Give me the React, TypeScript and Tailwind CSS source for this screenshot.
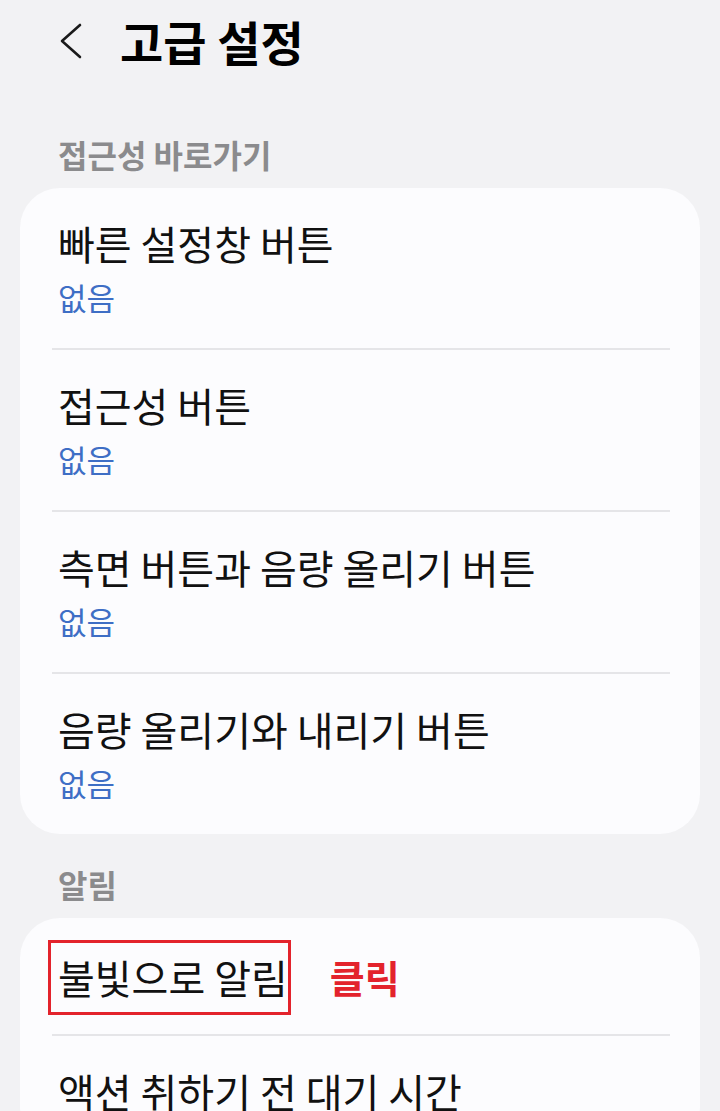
const font = { fontFamily: '"Noto Sans CJK KR", "Noto Sans", sans-serif' };

type Item = { title: string; value?: string };

const shortcuts: Item[] = [
  { title: "빠른 설정창 버튼", value: "없음" },
  { title: "접근성 버튼", value: "없음" },
  { title: "측면 버튼과 음량 올리기 버튼", value: "없음" },
  { title: "음량 올리기와 내리기 버튼", value: "없음" },
];

function Row({ item }: { item: Item }) {
  return (
    <div className="px-[38px] pt-[31px] pb-[31px]">
      <div className="text-[40px] leading-[48px] text-[#111111]">{item.title}</div>
      {item.value && (
        <div className="mt-[10px] text-[31px] leading-[40px] text-[#3e6ec5]">{item.value}</div>
      )}
    </div>
  );
}

function Divider() {
  return <div className="ml-[32px] mr-[30px] h-[2px] bg-[#e5e5e8]" />;
}

export default function App() {
  return (
    <div className="h-[1111px] w-[720px] overflow-hidden bg-[#f2f2f4]" style={font}>
      <div className="flex h-[82px] items-center pl-[58px]">
        <svg width="26" height="36" viewBox="0 0 26 36" className="mr-[36px]">
          <path d="M22 2 L4 18 L22 34" fill="none" stroke="#1a1a1a" strokeWidth="2.6" strokeLinecap="round" strokeLinejoin="round" />
        </svg>
        <h1 className="text-[47px] font-bold leading-[56px] text-black">고급 설정</h1>
      </div>

      <div className="mt-[52px] mb-[14px] px-[58px] text-[32px] font-semibold leading-[40px] text-[#8b8b8d]">
        접근성 바로가기
      </div>
      <div className="mx-[20px] rounded-[40px] bg-[#fcfcfe]">
        {shortcuts.map((it, i) => (
          <div key={it.title}>
            {i > 0 && <Divider />}
            <Row item={it} />
          </div>
        ))}
      </div>

      <div className="mt-[30px] mb-[14px] px-[58px] text-[32px] font-semibold leading-[40px] text-[#8b8b8d]">
        알림
      </div>
      <div className="mx-[20px] rounded-[40px] bg-[#fcfcfe]">
        <div className="flex items-center px-[38px] pt-[35px] pb-[33px]">
          <span className="relative text-[40px] leading-[48px] text-[#111111]">
            불빛으로 알림
            <span className="absolute -left-[10px] -right-[3px] -top-[13px] -bottom-[14px] border-[3px] border-[#e3232c]" />
          </span>
          <span className="ml-[42px] text-[38px] font-bold leading-[48px] text-[#e3232c]">클릭</span>
        </div>
        <Divider />
        <Row item={{ title: "액션 취하기 전 대기 시간" }} />
      </div>
    </div>
  );
}
